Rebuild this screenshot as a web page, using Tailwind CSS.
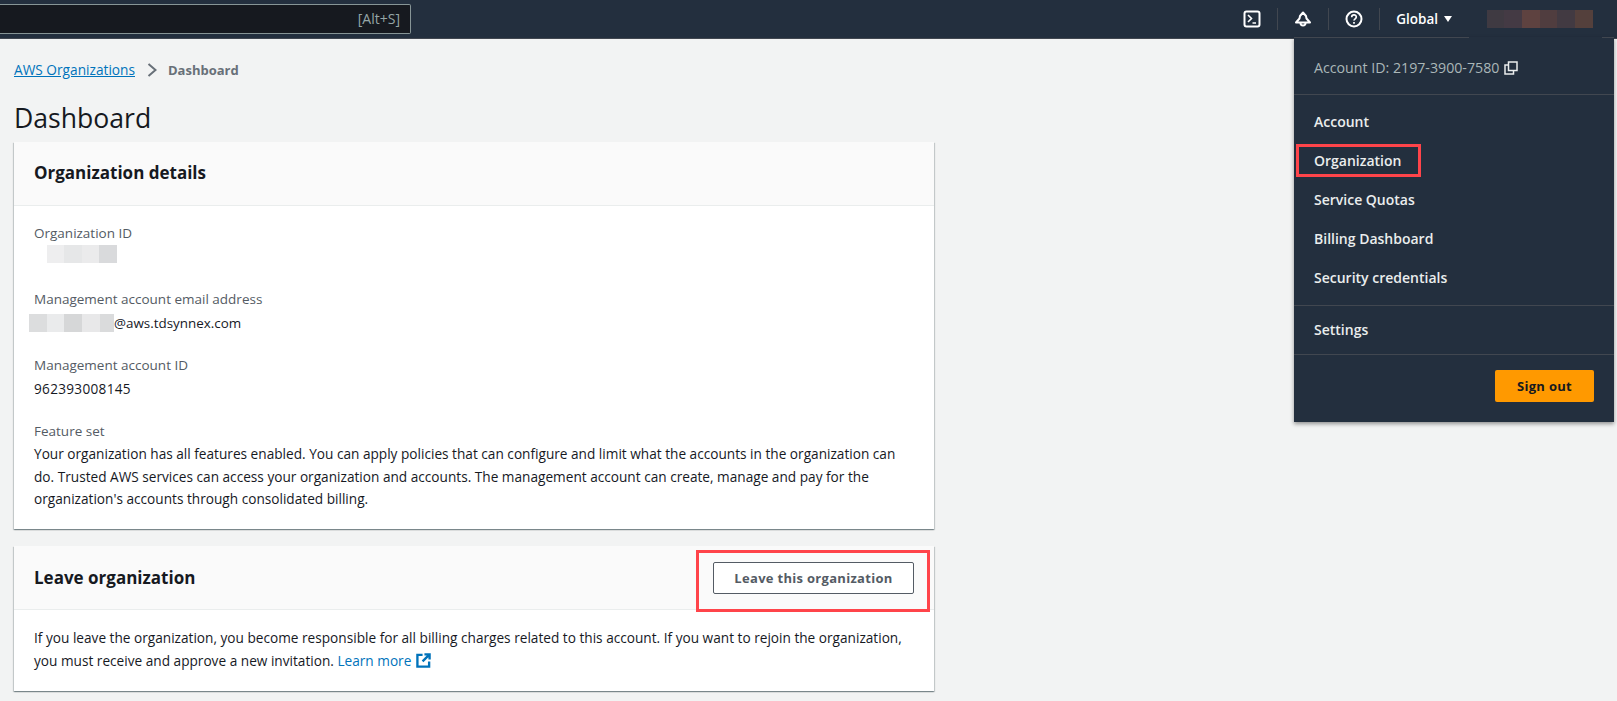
<!DOCTYPE html>
<html lang="en">
<head>
    <meta charset="UTF-8">
    <title>AWS Organizations Dashboard</title>
    <script src="https://cdn.jsdelivr.net/npm/@tailwindcss/browser@4"></script>
</head>
<body class="relative h-[701px] w-[1617px] overflow-hidden bg-[#f2f3f3] font-['Open_Sans','Liberation_Sans',sans-serif] text-[13.6px] leading-[22px] text-[#16191f]">
    <!-- Top nav -->
    <nav class="flex h-[39px] items-center border-b border-[#414750] bg-[#232f3e] text-white">
        <div class="-mt-[1px] flex h-[30px] w-[411px] items-center justify-end rounded-r-[2px] border border-l-0 border-[#879596] bg-[#16191f] pr-[10px] text-[14px] text-[#95a5a6]">[Alt+S]</div>
        <div class="ml-auto flex items-center pr-[24px]">
            <svg class="h-[18px] w-[18px]" viewBox="0 0 18 18" fill="none" stroke="#fff" stroke-width="2"><rect x="1.500" y="1.500" width="15" height="15" rx="2"/><path d="M5 5l3.500 3.500L5 12M9.500 13H13" stroke-width="1.600"/></svg>
            <span class="mx-[16px] h-[22px] w-px bg-[#414750]"></span>
            <svg class="h-[18px] w-[18px]" viewBox="0 0 18 18" fill="none" stroke="#fff" stroke-width="2"><path d="M9 2.500l-3 3.500-.500 2.500L2 12.500h14l-3.500-4-.500-2.500z" stroke-linejoin="round"/><path d="M6.500 13a2.500 2.500 0 005 0"/></svg>
            <span class="mx-[16px] h-[22px] w-px bg-[#414750]"></span>
            <svg class="h-[18px] w-[18px]" viewBox="0 0 18 18" fill="none" stroke="#fff" stroke-width="2"><circle cx="9" cy="9" r="7.500"/><path d="M6.700 7.200c0-3 4.600-3 4.600-.2 0 1.800-2.300 1.800-2.300 3.600" stroke-width="1.700"/><path d="M9 12v1.800" stroke-width="1.700"/></svg>
            <span class="mx-[16px] h-[22px] w-px bg-[#414750]"></span>
            <span class="text-[13.5px] font-semibold">Global</span>
            <span class="ml-[6px] h-0 w-0 border-x-[4px] border-t-[6px] border-x-transparent border-t-white"></span>
            <div class="ml-[35px] flex h-[18px] w-[106px]">
                <span class="w-[17px] bg-[#3f3a42]"></span><span class="w-[18px] bg-[#443a44]"></span><span class="w-[18px] bg-[#5e4240]"></span><span class="w-[17px] bg-[#503d3f]"></span><span class="w-[18px] bg-[#423a42]"></span><span class="w-[18px] bg-[#54403c]"></span>
            </div>
        </div>
    </nav>

    <!-- Main content -->
    <main class="w-[934px] pl-[14px]">
        <div class="mt-[20px] flex h-[22px] items-center">
            <a class="text-[13.7px] text-[#0073bb] underline">AWS Organizations</a>
            <svg class="ml-[12px] mr-[11px] h-[14px] w-[10px]" viewBox="0 0 10 14" fill="none" stroke="#687078" stroke-width="2"><path d="M1.500 1l7 6-7 6"/></svg>
            <span class="text-[13px] font-bold text-[#687078]">Dashboard</span>
        </div>
        <h1 class="mt-[19px] text-[26.6px] leading-[36px]">Dashboard</h1>

        <section class="mt-[6px] bg-white shadow-[0_1px_1px_0_rgba(0,28,36,0.3),1px_1px_1px_0_rgba(0,28,36,0.15),-1px_1px_1px_0_rgba(0,28,36,0.15)]">
            <header class="flex h-[64px] items-center border-b border-[#eaeded] bg-[#fafafa] px-[20px]">
                <h2 class="-mt-[2px] text-[17px] font-bold">Organization details</h2>
            </header>
            <div class="px-[20px] pt-[16px] pb-[18px]">
                <div class="h-[66px]">
                    <div class="text-[13.5px] text-[#545b64]">Organization ID</div>
                    <div class="mt-[1px] flex h-[18px]"><span class="ml-[13px] w-[17px] bg-[#eeeeef]"></span><span class="w-[18px] bg-[#e6e7e8]"></span><span class="w-[17px] bg-[#ebebec]"></span><span class="w-[18px] bg-[#d9dadc]"></span></div>
                </div>
                <div class="h-[66px]">
                    <div class="text-[13.5px] text-[#545b64]">Management account email address</div>
                    <div class="mt-[2px] flex items-center"><span class="-ml-[5px] flex h-[18px]"><span class="w-[18px] bg-[#dcddde]"></span><span class="w-[17px] bg-[#eaebec]"></span><span class="w-[18px] bg-[#d6d7d8]"></span><span class="w-[18px] bg-[#e8e8e9]"></span><span class="w-[14px] bg-[#dadbdc]"></span></span><span class="text-[13.4px]">@aws.tdsynnex.com</span></div>
                </div>
                <div class="h-[66px]">
                    <div class="text-[13.5px] text-[#545b64]">Management account ID</div>
                    <div class="mt-[2px] tracking-[0.3px]">962393008145</div>
                </div>
                <div>
                    <div class="text-[13.5px] text-[#545b64]">Feature set</div>
                    <p class="mt-[1px] text-[13.65px] leading-[22.7px]">Your organization has all features enabled. You can apply policies that can configure and limit what the accounts in the organization can do. Trusted AWS services can access your organization and accounts. The management account can create, manage and pay for the organization's accounts through consolidated billing.</p>
                </div>
            </div>
        </section>

        <section class="mt-[17px] bg-white shadow-[0_1px_1px_0_rgba(0,28,36,0.3),1px_1px_1px_0_rgba(0,28,36,0.15),-1px_1px_1px_0_rgba(0,28,36,0.15)]">
            <header class="flex h-[64px] items-center justify-between border-b border-[#eaeded] bg-[#fafafa] px-[20px]">
                <h2 class="text-[17px] font-bold">Leave organization</h2>
                <div class="relative">
                    <button class="flex h-[32px] w-[201px] items-center justify-center rounded-[2px] border border-[#545b64] bg-white text-[13px] font-bold tracking-[0.3px] text-[#545b64]">Leave this organization</button>
                    <span class="absolute -left-[17px] -right-[16px] -top-[12px] -bottom-[18px] border-[3px] border-[#ff444a]"></span>
                </div>
            </header>
            <p class="px-[20px] pt-[17px] pb-[18px] text-[13.65px] leading-[22.7px]">If you leave the organization, you become responsible for all billing charges related to this account. If you want to rejoin the organization, you must receive and approve a new invitation. <a class="text-[#0073bb]">Learn more <svg class="ml-[1px] inline h-[15px] w-[15px] align-[-2px]" viewBox="0 0 16 16" fill="none" stroke="#0073bb" stroke-width="2.500"><path d="M7 2H1.500v12.500H14V9"/><path d="M9 1.500h5.500V7M14.500 1.500L7 9"/></svg></a></p>
        </section>
    </main>

    <!-- Account menu -->
    <div class="absolute left-[1294px] top-[37px] h-[385px] w-[320px] border-t border-[#414750] bg-[#232f3e] text-[#eaeded] shadow-[0_2px_4px_rgba(0,0,0,0.4)]">
        <span class="absolute -top-[1px] left-[175px] h-[1px] w-[133px] bg-[#232f3e]"></span>
        <div class="flex h-[57px] items-center border-b border-[#414750] px-[20px] pt-[3px] text-[#aab7b8]">
            <span class="text-[14.2px]">Account ID: 2197-3900-7580</span>
            <svg class="ml-[5px] h-[14px] w-[14px]" viewBox="0 0 14 14" fill="none" stroke="#eaeded" stroke-width="1.500"><rect x="4.500" y="1" width="8.500" height="8.500"/><path d="M4 4H1v9h8.500v-3"/></svg>
        </div>
        <ul class="border-b border-[#414750] pt-[7px] pb-[8px] text-[14px] font-semibold">
            <li class="flex h-[39px] items-center px-[20px]">Account</li>
            <li class="flex h-[39px] items-center px-[20px]"><span class="relative">Organization<span class="absolute -left-[18px] -right-[20px] -top-[6px] -bottom-[5px] border-[3px] border-[#ff444a]"></span></span></li>
            <li class="flex h-[39px] items-center px-[20px]">Service Quotas</li>
            <li class="flex h-[39px] items-center px-[20px]">Billing Dashboard</li>
            <li class="flex h-[39px] items-center px-[20px]">Security credentials</li>
        </ul>
        <div class="flex h-[49px] items-center border-b border-[#414750] px-[20px] text-[14px] font-semibold">Settings</div>
        <div class="flex justify-end px-[20px] pt-[15px]">
            <button class="h-[32px] w-[99px] rounded-[2px] bg-[#ff9900] text-[13px] font-bold tracking-[0.3px] text-[#16191f]">Sign out</button>
        </div>
    </div>
</body>
</html>
